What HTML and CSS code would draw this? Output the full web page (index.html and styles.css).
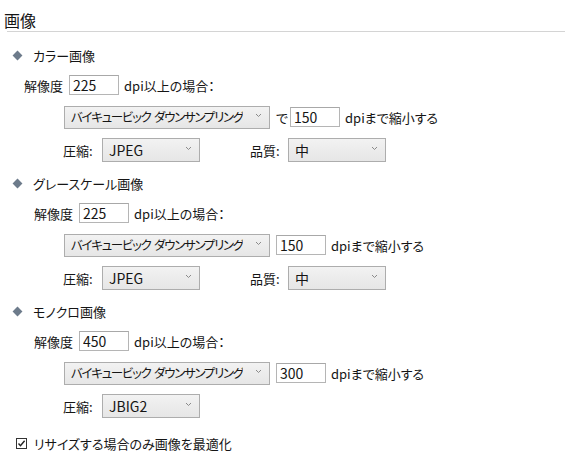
FILE: index.html
```html
<!DOCTYPE html>
<html lang="ja">
<head>
    <meta charset="UTF-8">
    <meta name="viewport" content="width=device-width, initial-scale=1.0">
    <title>画像</title>
    <link rel="stylesheet" href="styles.css">
</head>
<body>
    <div class="title">画像</div>

    <!-- カラー画像 -->
    <section class="group">
        <div class="group-head"><span class="diamond"></span>カラー画像</div>
        <div class="row row-res">
            <span class="label">解像度</span>
            <input class="num" type="text" value="225">
            <span>dpi以上の場合：</span>
        </div>
        <div class="row row-sample">
            <div class="select wide"><span class="opt">バイキュービック ダウンサンプリング</span><svg class="chev" width="7" height="5" viewBox="0 0 7 5"><path d="M1 1l2.5 2.5L6 1" fill="none" stroke="#8a8a8a" stroke-width="1"/></svg></div>
            <span class="de">で</span>
            <input class="num" type="text" value="150">
            <span>dpiまで縮小する</span>
        </div>
        <div class="row row-comp">
            <span class="label comp">圧縮:</span>
            <div class="select narrow"><span>JPEG</span><svg class="chev" width="7" height="5" viewBox="0 0 7 5"><path d="M1 1l2.5 2.5L6 1" fill="none" stroke="#8a8a8a" stroke-width="1"/></svg></div>
            <span class="label quality">品質:</span>
            <div class="select narrow"><span>中</span><svg class="chev" width="7" height="5" viewBox="0 0 7 5"><path d="M1 1l2.5 2.5L6 1" fill="none" stroke="#8a8a8a" stroke-width="1"/></svg></div>
        </div>
    </section>

    <!-- グレースケール画像 -->
    <section class="group">
        <div class="group-head"><span class="diamond"></span>グレースケール画像</div>
        <div class="row row-res indent">
            <span class="label">解像度</span>
            <input class="num" type="text" value="225">
            <span>dpi以上の場合：</span>
        </div>
        <div class="row row-sample">
            <div class="select wide"><span class="opt">バイキュービック ダウンサンプリング</span><svg class="chev" width="7" height="5" viewBox="0 0 7 5"><path d="M1 1l2.5 2.5L6 1" fill="none" stroke="#8a8a8a" stroke-width="1"/></svg></div>
            <input class="num" type="text" value="150">
            <span>dpiまで縮小する</span>
        </div>
        <div class="row row-comp">
            <span class="label comp">圧縮:</span>
            <div class="select narrow"><span>JPEG</span><svg class="chev" width="7" height="5" viewBox="0 0 7 5"><path d="M1 1l2.5 2.5L6 1" fill="none" stroke="#8a8a8a" stroke-width="1"/></svg></div>
            <span class="label quality">品質:</span>
            <div class="select narrow"><span>中</span><svg class="chev" width="7" height="5" viewBox="0 0 7 5"><path d="M1 1l2.5 2.5L6 1" fill="none" stroke="#8a8a8a" stroke-width="1"/></svg></div>
        </div>
    </section>

    <!-- モノクロ画像 -->
    <section class="group">
        <div class="group-head"><span class="diamond"></span>モノクロ画像</div>
        <div class="row row-res indent">
            <span class="label">解像度</span>
            <input class="num" type="text" value="450">
            <span>dpi以上の場合：</span>
        </div>
        <div class="row row-sample">
            <div class="select wide"><span class="opt">バイキュービック ダウンサンプリング</span><svg class="chev" width="7" height="5" viewBox="0 0 7 5"><path d="M1 1l2.5 2.5L6 1" fill="none" stroke="#8a8a8a" stroke-width="1"/></svg></div>
            <input class="num" type="text" value="300">
            <span>dpiまで縮小する</span>
        </div>
        <div class="row row-comp">
            <span class="label comp">圧縮:</span>
            <div class="select narrow"><span>JBIG2</span><svg class="chev" width="7" height="5" viewBox="0 0 7 5"><path d="M1 1l2.5 2.5L6 1" fill="none" stroke="#8a8a8a" stroke-width="1"/></svg></div>
        </div>
    </section>

    <div class="check-row">
        <span class="checkbox"><svg width="9" height="9" viewBox="0 0 9 9"><path d="M1.5 4.5l2 2.2L7.6 1.8" fill="none" stroke="#222" stroke-width="1.4"/></svg></span>
        リサイズする場合のみ画像を最適化
    </div>
</body>
</html>
```

FILE: styles.css
```css
body {
    margin: 0;
    padding: 0;
    background-color: #ffffff;
    color: #151515;
    font-family: "Noto Sans CJK JP", "Noto Sans", sans-serif;
    font-size: 13px;
    font-feature-settings: "palt";
}

.title {
    margin: 0 0 0 7px;
    padding-top: 10px;
    height: 21px;
    line-height: 21px;
    font-size: 16px;
    text-indent: -3px;
    border-bottom: 1px solid #d4d4d4;
}

.group {
    margin-top: 11px;
}

.group:first-of-type {
    margin-top: 13px;
}

.group-head {
    display: flex;
    align-items: center;
    height: 20px;
    padding-left: 14px;
}

.diamond {
    width: 7px;
    height: 7px;
    background-color: #6d7b8b;
    transform: rotate(45deg);
    margin-right: 12px;
}

.row {
    display: flex;
    align-items: center;
    height: 24px;
    margin-top: 8px;
}

.row-res {
    padding-left: 24px;
}

.row-res.indent {
    padding-left: 34px;
}

.row-res .label {
    margin-right: 6px;
}

.row-sample {
    padding-left: 64px;
}

.row-comp {
    margin-top: 9px;
    padding-left: 63px;
}

.num {
    box-sizing: border-box;
    width: 50px;
    height: 20px;
    padding: 0 0 0 3px;
    margin: 0 5px 0 0;
    border: 1px solid #b5b5b5;
    border-top-color: #a8a8a8;
    background-color: #ffffff;
    color: #151515;
    font-family: "Noto Sans CJK JP", sans-serif;
    font-size: 14px;
    line-height: 18px;
    outline: none;
}

.select {
    box-sizing: border-box;
    display: flex;
    align-items: center;
    justify-content: space-between;
    height: 23px;
    padding: 0 7px 1px 6px;
    border: 1px solid #adadad;
    background: linear-gradient(#f2f2f2, #e6e6e6);
    white-space: nowrap;
}

.select.wide {
    width: 206px;
    margin-right: 6px;
}

.select .opt {
    overflow: hidden;
    font-size: 12.5px;
    letter-spacing: -1.3px;
    word-spacing: 2px;
}

.select.narrow {
    width: 98px;
    height: 24px;
    font-size: 14px;
}

.chev {
    flex-shrink: 0;
    margin-bottom: 3px;
}

.de {
    margin-right: 2px;
}

.label.comp {
    width: 39px;
}

.label.quality {
    margin-left: 50px;
    width: 38px;
}

.check-row {
    display: flex;
    align-items: center;
    height: 20px;
    margin-top: 15px;
    padding-left: 16px;
}

.checkbox {
    box-sizing: border-box;
    display: flex;
    align-items: center;
    justify-content: center;
    width: 11px;
    height: 11px;
    border: 1px solid #333333;
    margin-right: 7px;
}
```
